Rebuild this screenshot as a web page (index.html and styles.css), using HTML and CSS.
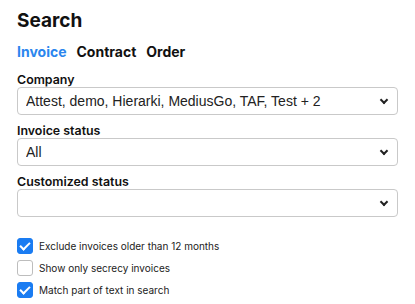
FILE: index.html
```html
<!DOCTYPE html>
<html lang="en">
<head>
    <meta charset="UTF-8">
    <link rel="stylesheet" href="styles.css">
    <title>Search</title>
</head>
<body>

    <div class="search">
        <h1 class="title">Search</h1>

        <div class="tabs">
            <span class="tab active">Invoice</span>
            <span class="tab">Contract</span>
            <span class="tab">Order</span>
        </div>

        <div class="field">
            <label for="company">Company</label>
            <div class="select-box">
                <select id="company">
                    <option>Attest, demo, Hierarki, MediusGo, TAF, Test + 2</option>
                </select>
            </div>
        </div>

        <div class="field">
            <label for="status">Invoice status</label>
            <div class="select-box">
                <select id="status">
                    <option>All</option>
                </select>
            </div>
        </div>

        <div class="field">
            <label for="custom">Customized status</label>
            <div class="select-box">
                <select id="custom">
                    <option></option>
                </select>
            </div>
        </div>

        <div class="checks">
            <label class="check"><input type="checkbox" checked> Exclude invoices older than 12 months</label>
            <label class="check"><input type="checkbox"> Show only secrecy invoices</label>
            <label class="check"><input type="checkbox" checked> Match part of text in search</label>
        </div>
    </div>

</body>
</html>
```

FILE: styles.css
```css
body {
    margin: 0;
    font-family: 'Inter', 'Liberation Sans', sans-serif;
    color: #111;
    background: #fff;
}

.search {
    padding: 9px 17px 0 17px;
}

.title {
    margin: 0;
    font-size: 19px;
    font-weight: 700;
    line-height: 24px;
}

.tabs {
    display: flex;
    gap: 10px;
    margin-top: 10px;
    margin-bottom: 11px;
}

.tab {
    font-size: 14px;
    font-weight: 700;
    line-height: 18px;
}

.tab.active {
    color: #2b86ee;
}

.field {
    margin-bottom: 8px;
}

.field label {
    display: block;
    font-size: 12.4px;
    font-weight: 600;
    line-height: 15px;
}

.select-box {
    position: relative;
}

.select-box select {
    display: block;
    width: 100%;
    height: 28px;
    padding: 0 24px 0 8px;
    border: 1px solid #c9c9c9;
    border-radius: 4px;
    background: #fff;
    font-family: 'Liberation Sans', Arial, sans-serif;
    font-size: 14px;
    color: #222;
    appearance: none;
    -webkit-appearance: none;
}

.select-box::after {
    content: "";
    position: absolute;
    right: 11px;
    top: 10px;
    width: 4px;
    height: 4px;
    border-right: 2px solid #222;
    border-bottom: 2px solid #222;
    transform: rotate(45deg);
    pointer-events: none;
}

.checks {
    margin-top: 21px;
    display: flex;
    flex-direction: column;
    gap: 6px;
}

.check {
    display: flex;
    align-items: center;
    gap: 6px;
    font-size: 10px;
    line-height: 16px;
    color: #222;
}

.check input {
    appearance: none;
    -webkit-appearance: none;
    margin: 0;
    width: 16px;
    height: 16px;
    border: 1px solid #bdbdbd;
    border-radius: 3px;
    background: #fff;
    position: relative;
}

.check input:checked {
    background: #1a7cf2;
    border-color: #1a7cf2;
}

.check input:checked::after {
    content: "";
    position: absolute;
    left: 4px;
    top: 1px;
    width: 4px;
    height: 8px;
    border-right: 2px solid #fff;
    border-bottom: 2px solid #fff;
    transform: rotate(45deg);
}
```
